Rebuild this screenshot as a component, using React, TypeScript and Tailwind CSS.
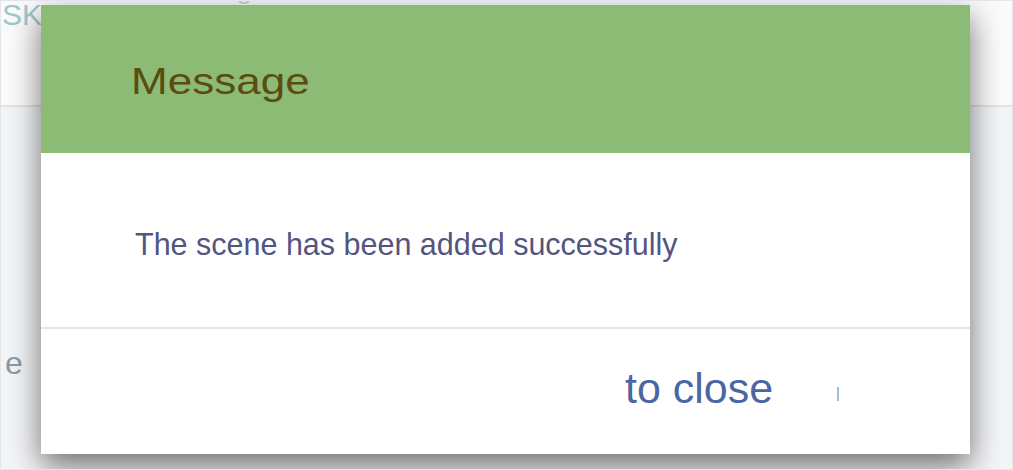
import React from "react";

export default function App() {
  return (
    <div className="relative w-[1013px] h-[470px] overflow-hidden bg-[#f4f5f7] border border-[#e2e5ea]" style={{ fontFamily: '"Liberation Sans", Arial, sans-serif' }}>
      {/* background page */}
      <div className="flex flex-col w-full">
        <div className="h-[106px] bg-[#fbfbfc] border-b-2 border-[#e3e3e3] relative">
          <div className="absolute left-[1px] top-[-1px] text-[30px] leading-none text-[#9fc8ca] whitespace-nowrap">SK</div>
          <div className="absolute left-[70px] top-[-28px] text-[30px] leading-none text-[#cfd8c8] whitespace-nowrap">Scene setting list</div>
        </div>
        <div className="h-[230px] relative">
          <div className="absolute left-[4px] top-[232px] text-[32px] text-[#8a9aa8]">e</div>
        </div>
      </div>

      {/* dialog */}
      <div className="absolute left-[40px] top-[4px] w-[929px] h-[449px] bg-white flex flex-col shadow-[0_12px_30px_rgba(0,0,0,0.55)]">
        <div className="h-[148px] bg-[#8cbb76] flex items-center pl-[90px] pt-[6px]">
          <span className="text-[37px] text-[#5b4c10] inline-block scale-x-[1.19] origin-left">Message</span>
        </div>
        <div className="h-[176px] border-b-2 border-[#e6e6e6] flex items-center pl-[94px] pt-[10px]">
          <span className="text-[30.5px] text-[#54557f]">The scene has been added successfully</span>
        </div>
        <div className="flex-1 flex items-center pl-[584px] pb-[6px] relative">
          <span className="text-[43px] text-[#4a67a3]">to close</span>
          <span className="absolute left-[796px] top-[58px] w-[2px] h-[14px] bg-[#9cc0e0]" />
        </div>
      </div>
    </div>
  );
}
